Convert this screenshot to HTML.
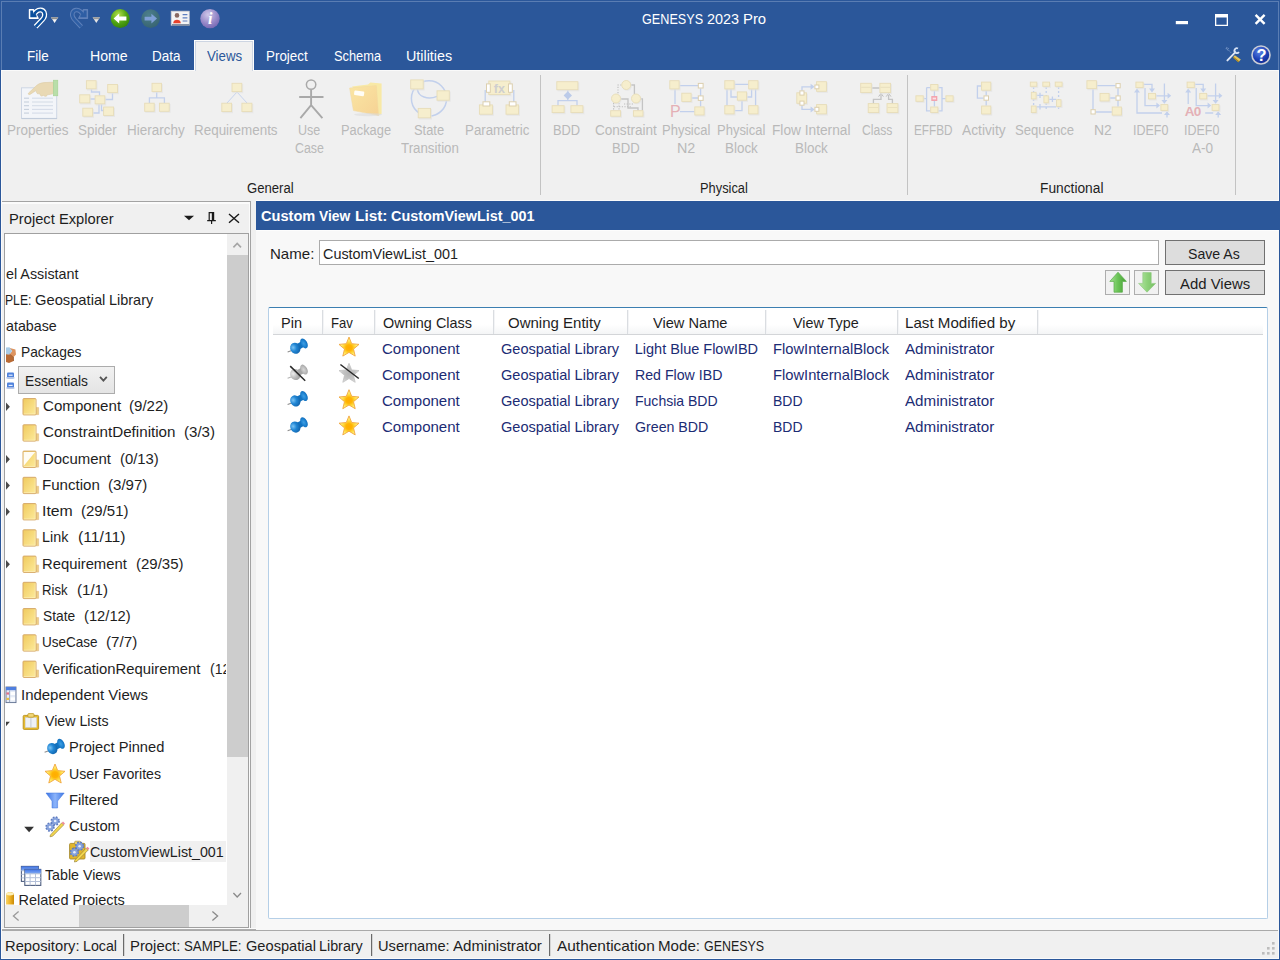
<!DOCTYPE html>
<html lang="en">
<head>
<meta charset="utf-8">
<title>GENESYS 2023 Pro</title>
<style>
html,body{margin:0;padding:0;}
body{width:1280px;height:960px;overflow:hidden;position:relative;background:#2b579a;font-family:"Liberation Sans",sans-serif;font-size:14.5px;color:#1a1a1a;}
.a{position:absolute;box-sizing:border-box;}
.t{position:absolute;white-space:pre;line-height:20px;height:20px;transform-origin:0 0;}
svg{position:absolute;overflow:visible;}
</style>
</head>
<body>
<!-- window chrome -->
<div class="a" id="ribbon" style="left:1px;top:70px;width:1278px;height:889px;background:#f0f0f0"></div>
<div class="a" style="left:2px;top:70px;width:1276px;height:1px;background:#fafafa"></div>
<div class="a" id="viewstab" style="left:194px;top:40px;width:60px;height:31px;background:#f0f0f0;border:1px solid #fdfdfd;border-bottom:none;box-shadow:inset 1px 1px 0 #cdd5e2,inset -1px 0 0 #cdd5e2"></div>
<div class="a" style="left:1px;top:1px;width:1278px;height:1px;background:#5a7db3"></div>
<div class="a" style="left:1px;top:1px;width:1px;height:69px;background:#5a7db3"></div>
<div class="a" style="left:1278px;top:1px;width:1px;height:69px;background:#5a7db3"></div>
<div class="a" style="left:1px;top:70px;width:1px;height:889px;background:#fafafa"></div>
<div class="a" style="left:1278px;top:70px;width:1px;height:889px;background:#fafafa"></div>
<div class="a" style="left:1px;top:958px;width:1278px;height:1px;background:#fafafa"></div>
<div class="a" style="left:540px;top:75px;width:1px;height:120px;background:#c3c3c3"></div>
<div class="a" style="left:907px;top:75px;width:1px;height:120px;background:#c3c3c3"></div>
<div class="a" style="left:1235px;top:75px;width:1px;height:120px;background:#c3c3c3"></div>

<!-- left panel: Project Explorer -->
<div class="a" id="pe" style="left:2px;top:201px;width:249px;height:727px;background:#f0f0f0;border:1px solid #a3a3a3;border-left:none;border-bottom:none;box-shadow:inset -1px 0 0 #fbfbfb,inset 0 2px 0 #fbfbfb"></div>
<div class="a" id="tree" style="left:4px;top:233px;width:245px;height:695px;background:#fff;border:1px solid #a0a0a0"></div>
<div class="a" id="vsb" style="left:227px;top:234px;width:21px;height:671px;background:#f0f0f0"></div>
<div class="a" id="vthumb" style="left:227px;top:255px;width:21px;height:502px;background:#cdcdcd"></div>
<div class="a" id="hsb" style="left:5px;top:905px;width:243px;height:22px;background:#f0f0f0"></div>
<div class="a" id="hthumb" style="left:79px;top:905px;width:110px;height:22px;background:#cdcdcd"></div>
<div class="a" id="selrow" style="left:90px;top:841px;width:136px;height:21px;background:#f0f0f0"></div>
<div class="a" id="combo" style="left:18px;top:366px;width:97px;height:28px;background:linear-gradient(#f1f1f1,#e4e4e4);border:1px solid #acacac"></div>

<!-- right panel -->
<div class="a" id="rp" style="left:256px;top:201px;width:1023px;height:729px;background:#f8f8f8"></div>
<div class="a" style="left:256px;top:200px;width:1023px;height:1px;background:#fbfbfb"></div>
<div class="a" style="left:256px;top:230px;width:1023px;height:1px;background:#fdfdfd"></div>
<div class="a" id="rph" style="left:256px;top:201px;width:1023px;height:29px;background:#2b579a"></div>
<div class="a" id="namebox" style="left:319px;top:240px;width:840px;height:25px;background:#fff;border:1px solid #ababab"></div>
<div class="a" id="saveas" style="left:1165px;top:240px;width:100px;height:25px;background:#dddddd;border:1px solid #707070"></div>
<div class="a" id="addviews" style="left:1165px;top:270px;width:100px;height:25px;background:#dddddd;border:1px solid #707070"></div>
<div class="a" id="upbtn" style="left:1105px;top:270px;width:25px;height:25px;background:#f1f1f1;border:1px solid #adadad"></div>
<div class="a" id="dnbtn" style="left:1134px;top:270px;width:25px;height:25px;background:#f1f1f1;border:1px solid #adadad"></div>
<div class="a" id="list" style="left:268px;top:307px;width:1000px;height:612px;background:#fff;border:1px solid #b5cfe7;border-top-color:#3c7fb1;border-radius:2px"></div>
<div class="a" id="lhdr" style="left:273px;top:310px;width:990px;height:25px;background:linear-gradient(#fff,#fff 60%,#f4f5f6);border-bottom:1px solid #d3d5d8"></div>

<div class="a" style="left:322px;top:310px;width:2px;height:24px;background:linear-gradient(90deg,#dadde1 50%,#f3f4f6 50%)"></div>
<div class="a" style="left:374px;top:310px;width:2px;height:24px;background:linear-gradient(90deg,#dadde1 50%,#f3f4f6 50%)"></div>
<div class="a" style="left:493px;top:310px;width:2px;height:24px;background:linear-gradient(90deg,#dadde1 50%,#f3f4f6 50%)"></div>
<div class="a" style="left:627px;top:310px;width:2px;height:24px;background:linear-gradient(90deg,#dadde1 50%,#f3f4f6 50%)"></div>
<div class="a" style="left:765px;top:310px;width:2px;height:24px;background:linear-gradient(90deg,#dadde1 50%,#f3f4f6 50%)"></div>
<div class="a" style="left:897px;top:310px;width:2px;height:24px;background:linear-gradient(90deg,#dadde1 50%,#f3f4f6 50%)"></div>
<div class="a" style="left:1037px;top:310px;width:2px;height:24px;background:linear-gradient(90deg,#dadde1 50%,#f3f4f6 50%)"></div>

<!-- status bar -->
<div class="a" style="left:2px;top:928px;width:254px;height:1px;background:#fbfbfb"></div>
<div class="a" style="left:2px;top:929px;width:254px;height:1px;background:#adadad"></div>
<div class="a" id="status" style="left:2px;top:930px;width:1276px;height:28px;background:#f0f0f0;border-top:1px solid #a9a9a9"></div>
<div class="a" style="left:123px;top:934px;width:2px;height:22px;background:linear-gradient(90deg,#6a6a6a 50%,#d4d4d4 50%)"></div>
<div class="a" style="left:371px;top:934px;width:2px;height:22px;background:linear-gradient(90deg,#6a6a6a 50%,#d4d4d4 50%)"></div>
<div class="a" style="left:549px;top:934px;width:2px;height:22px;background:linear-gradient(90deg,#6a6a6a 50%,#d4d4d4 50%)"></div>
<!-- icons -->
<svg width="1280" height="960" viewBox="0 0 1280 960" style="left:0;top:0">
<defs>
<linearGradient id="gFold" x1="0" y1="0" x2="1" y2="1"><stop offset="0" stop-color="#f0ca5e"/><stop offset="1" stop-color="#fdeb9c"/></linearGradient>
<radialGradient id="gGreen" cx="0.4" cy="0.3" r="0.8"><stop offset="0" stop-color="#b4e04a"/><stop offset="0.55" stop-color="#4ea312"/><stop offset="1" stop-color="#2f7a08"/></radialGradient>
<radialGradient id="gTeal" cx="0.4" cy="0.3" r="0.8"><stop offset="0" stop-color="#4d7f8c"/><stop offset="1" stop-color="#35616f"/></radialGradient>
<radialGradient id="gPurp" cx="0.4" cy="0.3" r="0.8"><stop offset="0" stop-color="#cfc8ea"/><stop offset="0.6" stop-color="#9385c6"/><stop offset="1" stop-color="#6f60ad"/></radialGradient>
<radialGradient id="gHelp" cx="0.4" cy="0.3" r="0.8"><stop offset="0" stop-color="#5f86e8"/><stop offset="0.6" stop-color="#1c3fb4"/><stop offset="1" stop-color="#10298a"/></radialGradient>
<radialGradient id="gStar" cx="0.5" cy="0.56" r="0.52"><stop offset="0" stop-color="#ffac00"/><stop offset="0.3" stop-color="#ffb304"/><stop offset="0.55" stop-color="#ffd83a"/><stop offset="0.8" stop-color="#fff27a"/><stop offset="1" stop-color="#ffe258"/></radialGradient>
<radialGradient id="gStarG" cx="0.5" cy="0.55" r="0.55"><stop offset="0" stop-color="#b4b4b4"/><stop offset="0.6" stop-color="#c6c6c6"/><stop offset="1" stop-color="#e6e6e6"/></radialGradient>
<radialGradient id="gPin" cx="0.35" cy="0.35" r="0.75"><stop offset="0" stop-color="#7cc4f4"/><stop offset="0.45" stop-color="#2186d4"/><stop offset="1" stop-color="#0f5fa6"/></radialGradient>
<radialGradient id="gPin2" cx="0.45" cy="0.5" r="0.6"><stop offset="0" stop-color="#3f9fe2"/><stop offset="0.6" stop-color="#1a7fcf"/><stop offset="1" stop-color="#0f66b0"/></radialGradient>
<radialGradient id="gPinG2" cx="0.45" cy="0.5" r="0.6"><stop offset="0" stop-color="#d8d8d8"/><stop offset="0.6" stop-color="#b8b8b8"/><stop offset="1" stop-color="#9c9c9c"/></radialGradient>
<radialGradient id="gPinG" cx="0.35" cy="0.35" r="0.75"><stop offset="0" stop-color="#efefef"/><stop offset="0.5" stop-color="#bdbdbd"/><stop offset="1" stop-color="#9a9a9a"/></radialGradient>
<linearGradient id="gFun" x1="0" y1="0" x2="1" y2="0"><stop offset="0" stop-color="#3a72e4"/><stop offset="0.5" stop-color="#8cb4fa"/><stop offset="1" stop-color="#3f78e6"/></linearGradient>
<linearGradient id="gUp" x1="0" y1="0" x2="1" y2="0"><stop offset="0" stop-color="#a8e296"/><stop offset="0.45" stop-color="#6ec65a"/><stop offset="1" stop-color="#449f33"/></linearGradient>
<linearGradient id="gDn" x1="0" y1="0" x2="1" y2="0"><stop offset="0" stop-color="#b7e6a6"/><stop offset="0.5" stop-color="#8ed27a"/><stop offset="1" stop-color="#76bf62"/></linearGradient>
<linearGradient id="gTblH" x1="0" y1="0" x2="0" y2="1"><stop offset="0" stop-color="#3f73e6"/><stop offset="1" stop-color="#86aef4"/></linearGradient>
<linearGradient id="gPkg" x1="0" y1="0" x2="1" y2="1"><stop offset="0" stop-color="#fae6a4"/><stop offset="1" stop-color="#f6d294"/></linearGradient>
<linearGradient id="gCyl" x1="0" y1="0" x2="1" y2="0"><stop offset="0" stop-color="#f8d468"/><stop offset="0.5" stop-color="#efb224"/><stop offset="1" stop-color="#c98a08"/></linearGradient>
<g id="pin"><path d="M-0.4 13.7 L3.8 12.2" stroke="#8e8e8e" stroke-width="1.1" fill="none"/><g transform="translate(7.3 10) rotate(-29)"><rect x="2" y="-3" width="7.4" height="6" fill="#1273c0"/><ellipse rx="5" ry="5.7" fill="url(#gPin)"/></g><g transform="translate(16 5.1) rotate(-29)"><ellipse rx="3.2" ry="5.4" fill="url(#gPin2)"/></g></g>
<g id="ping"><path d="M-0.4 13.7 L3.8 12.2" stroke="#b4b4b4" stroke-width="1.1" fill="none"/><g transform="translate(7.3 10) rotate(-29)"><rect x="2" y="-3" width="7.4" height="6" fill="#a8a8a8"/><ellipse rx="5" ry="5.7" fill="url(#gPinG)"/></g><g transform="translate(16 5.1) rotate(-29)"><ellipse rx="3.2" ry="5.4" fill="url(#gPinG2)"/></g><path d="M2.2 1.6 L17.2 16.2" stroke="#2a2a2a" stroke-width="1.5"/></g>
<path id="starp" d="M10 0 L12.7 6.6 L20 7.3 L14.5 12 L16.2 19 L10 15.3 L3.8 19 L5.5 12 L0 7.3 L7.3 6.6 Z"/>
<g id="star"><use href="#starp" fill="url(#gStar)" stroke="#f2a640" stroke-width="0.9" stroke-linejoin="round"/></g>
<g id="starg"><use href="#starp" fill="url(#gStarG)" stroke="#bcbcbc" stroke-width="0.7" stroke-linejoin="round"/><path d="M1.4 1.2 L19.8 15.2" stroke="#2a2a2a" stroke-width="1.5"/></g>
<g id="fold"><path d="M13.5 9.6 H16.2 V16.6 H13.5 Z" fill="#efd084" stroke="#e4bf8a" stroke-width="0.7"/><rect x="0.6" y="0.6" width="13" height="16.3" rx="0.8" fill="url(#gFold)" stroke="#d6a868" stroke-width="1"/><path d="M1.4 16 H12.8 V1.6" stroke="#fff4c8" stroke-width="0.7" fill="none" opacity="0.8"/></g>
<g id="gear"><circle cx="0" cy="0" r="3.6" fill="#7d98d6" stroke="#5f7cc0" stroke-width="2.2" stroke-dasharray="1.6 1.25"/><circle cx="0" cy="0" r="3.2" fill="#86a2dc"/><circle cx="0" cy="0" r="1.3" fill="#e8eefb"/></g>
</defs>

<path d="M29.4 9.6 L33.4 9.6 L38.2 18.3 L29.4 18.3 Z" fill="#ffffff" stroke="#ffffff" stroke-width="1.2" stroke-linejoin="round"/>
<path d="M34.2 13.8 L36.6 11.4 C38.8 9.4 42.8 9.4 44.2 12.4 C45.4 15.2 44 17.8 42.2 19.8 L35.6 26.8" fill="none" stroke="#ffffff" stroke-width="5.0"/>
<path d="M30.3 10.5 L32.8 10.5 L33.4 13.2 L36.2 14.6 L36.8 17.2 L30.3 17.2 Z" fill="#0a4f9e"/>
<path d="M34.2 13.8 L36.6 11.4 C38.8 9.4 42.8 9.4 44.2 12.4 C45.4 15.2 44 17.8 42.2 19.8 L35.6 26.8" fill="none" stroke="#0a4f9e" stroke-width="2.6"/>
<path d="M50.9 17.2 L58.3 17.2 L54.6 23 Z" fill="#f4f4f4"/><path d="M50.9 17.2 L58.3 17.2 L57 19.2 L52.2 19.2 Z" fill="#8e8e8e"/>
<path d="M87.5 9.6 L83.5 9.6 L78.7 18.3 L87.5 18.3 Z" fill="#5f81ba" stroke="#5f81ba" stroke-width="1.2" stroke-linejoin="round"/>
<path d="M82.7 13.8 L80.30000000000001 11.4 C78.10000000000001 9.4 74.10000000000001 9.4 72.7 12.4 C71.5 15.2 72.9 17.8 74.7 19.8 L81.30000000000001 26.8" fill="none" stroke="#5f81ba" stroke-width="4.6"/>
<path d="M86.60000000000001 10.5 L84.10000000000001 10.5 L83.5 13.2 L80.7 14.6 L80.10000000000001 17.2 L86.60000000000001 17.2 Z" fill="#2e5ea4"/>
<path d="M82.7 13.8 L80.30000000000001 11.4 C78.10000000000001 9.4 74.10000000000001 9.4 72.7 12.4 C71.5 15.2 72.9 17.8 74.7 19.8 L81.30000000000001 26.8" fill="none" stroke="#2e5ea4" stroke-width="2.6"/>
<path d="M92.6 17.2 L100 17.2 L96.3 23 Z" fill="#e4e4e4"/><path d="M92.6 17.2 L100 17.2 L98.7 19.2 L93.9 19.2 Z" fill="#9a9a9a"/>
<circle cx="120.2" cy="18.6" r="9.5" fill="url(#gGreen)"/><path d="M113.6 18.6 L119.2 13.6 L119.2 16.6 L126.4 16.6 L126.4 20.6 L119.2 20.6 L119.2 23.6 Z" fill="#ffffff"/>
<circle cx="150.6" cy="18.6" r="9.3" fill="url(#gTeal)"/><path d="M157 18.6 L151.4 13.8 L151.4 16.8 L144.6 16.8 L144.6 20.4 L151.4 20.4 L151.4 23.4 Z" fill="#7f9fd6"/>
<rect x="171.2" y="11.2" width="18" height="14" fill="#f4f4f4" stroke="#cfcfd4" stroke-width="0.8"/><rect x="172" y="24.2" width="17.4" height="1.4" fill="#6c7a92"/><circle cx="177" cy="15.4" r="2.3" fill="#8a6a62"/><path d="M173.2 23.2 C173.2 18.6 180.8 18.6 180.8 23.2 Z" fill="#e8412c"/><path d="M182.6 14.6 H187.4 M182.6 17.8 H187.4 M182.6 21 H187.4" stroke="#5e7fc0" stroke-width="1.2"/>
<circle cx="210" cy="18.6" r="9.7" fill="url(#gPurp)"/><text x="210.2" y="24" font-family="Liberation Serif,serif" font-style="italic" font-weight="700" font-size="16" fill="#ffffff" text-anchor="middle">i</text>
<rect x="1175.8" y="21" width="12.2" height="3.2" fill="#ffffff"/>
<path d="M1215 14 H1228 V26 H1215 Z M1216.3 17.6 V24.7 H1226.7 V17.6 Z" fill="#ffffff" fill-rule="evenodd"/>
<path d="M1255.6 14.8 L1264.6 23.8 M1264.6 14.8 L1255.6 23.8" stroke="#ffffff" stroke-width="2.4"/>
<path d="M1227.4 60.4 L1235.4 52.2" stroke="#dfe7f5" stroke-width="1.9" stroke-linecap="round"/><path d="M1238.9 51.9 A2.4 2.4 0 1 1 1238 48.5" fill="none" stroke="#d6e2f6" stroke-width="1.8"/><path d="M1226.4 47.4 L1228.4 48.2 L1228 50 L1226.2 49.2 Z M1228.6 50.2 L1231 52.8" fill="none" stroke="#8fa8d2" stroke-width="0.8" stroke-dasharray="1.2 0.8"/><path d="M1234.8 55.2 L1240.8 59.4 L1238.4 62.2 L1233 57.6 Z" fill="#e6c55a"/><path d="M1233 57.6 L1238.4 62.2 L1239.2 61.2 L1233.6 56.8 Z" fill="#a17f1f"/>
<circle cx="1261" cy="55" r="9.8" fill="#c9ccd6"/><circle cx="1261" cy="55" r="8.2" fill="url(#gHelp)"/><text x="1261.6" y="60.8" font-family="Liberation Sans,sans-serif" font-weight="700" font-size="16.5" fill="#ffffff" text-anchor="middle">?</text>
<rect x="21.5" y="87.8" width="35.2" height="30.6" fill="#f3f5f9" stroke="#ced6e4" stroke-width="1"/><path d="M21.6 118.6 H57" stroke="#c0cada" stroke-width="1"/>
<path d="M24 98.2 H29" fill="none" stroke="#c6cfdc" stroke-width="1.1" />
<path d="M32 98.2 H53" fill="none" stroke="#d5dce8" stroke-width="1.1" />
<path d="M24 102 H29" fill="none" stroke="#c6cfdc" stroke-width="1.1" />
<path d="M32 102 H53" fill="none" stroke="#d5dce8" stroke-width="1.1" />
<path d="M24 105.7 H29" fill="none" stroke="#c6cfdc" stroke-width="1.1" />
<path d="M32 105.7 H53" fill="none" stroke="#d5dce8" stroke-width="1.1" />
<path d="M24 109.4 H29" fill="none" stroke="#c6cfdc" stroke-width="1.1" />
<path d="M32 109.4 H53" fill="none" stroke="#d5dce8" stroke-width="1.1" />
<path d="M24 113.1 H29" fill="none" stroke="#c6cfdc" stroke-width="1.1" />
<path d="M32 113.1 H53" fill="none" stroke="#d5dce8" stroke-width="1.1" />
<path d="M53.4 82.2 L44 82.6 C40 83 37.5 84.5 35.5 86.5 L28.6 93 C27.8 94 28.8 95 30 94.4 L36 90.6 L36.6 92.6 C37 94 38.6 94.2 39.4 93.2 L40.2 95 C40.8 96.4 42.6 96.4 43.2 95.2 L44.4 96 C45.6 96.8 47 96.2 47.2 94.8 C49.6 94.6 51.6 94.2 53.4 93.6 Z" fill="#e9d9b4" stroke="#dccba4" stroke-width="0.6"/>
<rect x="53.4" y="80.2" width="4.4" height="15.6" fill="#b9dea9" stroke="#a4d292" stroke-width="0.6"/>
<path d="M91.5 89 V92 H99.5 V95.5 M90 99 H95 M105 99.5 H112.5 V93 M99 104 V113 H93 M101.5 104 V110.5 H104" fill="none" stroke="#c2d0ec" stroke-width="1.3" />
<rect x="87.0" y="81.5" width="10.5" height="8.9" fill="#e2e2e2" opacity="0.7"/>
<rect x="86.4" y="80.7" width="9.7" height="8.1" fill="#f6eecd" stroke="#e7dcb8" stroke-width="0.9"/>
<rect x="108.3" y="85.3" width="10.6" height="8.9" fill="#e2e2e2" opacity="0.7"/>
<rect x="107.7" y="84.5" width="9.8" height="8.1" fill="#f6eecd" stroke="#e7dcb8" stroke-width="0.9"/>
<rect x="80.3" y="95.6" width="10.9" height="8.9" fill="#e2e2e2" opacity="0.7"/>
<rect x="79.7" y="94.8" width="10.1" height="8.1" fill="#f6eecd" stroke="#e7dcb8" stroke-width="0.9"/>
<rect x="95.7" y="96.6" width="10.5" height="8.8" fill="#e2e2e2" opacity="0.7"/>
<rect x="95.1" y="95.8" width="9.7" height="8.0" fill="#f6eecd" stroke="#e7dcb8" stroke-width="0.9"/>
<rect x="83.4" y="109.0" width="10.6" height="8.8" fill="#e2e2e2" opacity="0.7"/>
<rect x="82.8" y="108.2" width="9.8" height="8.0" fill="#f6eecd" stroke="#e7dcb8" stroke-width="0.9"/>
<rect x="104.2" y="107.8" width="10.8" height="9.2" fill="#e2e2e2" opacity="0.7"/>
<rect x="103.6" y="107.0" width="10.0" height="8.4" fill="#f6eecd" stroke="#e7dcb8" stroke-width="0.9"/>
<path d="M156.7 91.5 V97.9 M149.4 103 V97.9 H164.4 V103" fill="none" stroke="#c2d0ec" stroke-width="1.3" />
<rect x="152.6" y="84.1" width="10.3" height="9.0" fill="#e2e2e2" opacity="0.7"/>
<rect x="152.0" y="83.3" width="9.5" height="8.2" fill="#f6eecd" stroke="#e7dcb8" stroke-width="0.9"/>
<rect x="145.3" y="104.0" width="10.3" height="8.9" fill="#e2e2e2" opacity="0.7"/>
<rect x="144.7" y="103.2" width="9.5" height="8.1" fill="#f6eecd" stroke="#e7dcb8" stroke-width="0.9"/>
<rect x="160.0" y="104.0" width="10.6" height="8.9" fill="#e2e2e2" opacity="0.7"/>
<rect x="159.4" y="103.2" width="9.8" height="8.1" fill="#f6eecd" stroke="#e7dcb8" stroke-width="0.9"/>
<path d="M237 92 L227 103 M237 92 L247 103" fill="none" stroke="#c2d0ec" stroke-width="0.9" />
<rect x="232.6" y="84.1" width="10.6" height="9.1" fill="#e2e2e2" opacity="0.7"/>
<rect x="232.0" y="83.3" width="9.8" height="8.3" fill="#f6eecd" stroke="#e7dcb8" stroke-width="0.9"/>
<rect x="222.4" y="104.0" width="10.6" height="9.2" fill="#e2e2e2" opacity="0.7"/>
<rect x="221.8" y="103.2" width="9.8" height="8.4" fill="#f6eecd" stroke="#e7dcb8" stroke-width="0.9"/>
<rect x="242.5" y="104.0" width="10.8" height="9.2" fill="#e2e2e2" opacity="0.7"/>
<rect x="241.9" y="103.2" width="10.0" height="8.4" fill="#f6eecd" stroke="#e7dcb8" stroke-width="0.9"/>
<g fill="none" stroke="#a9a9a9" stroke-width="1.9"><circle cx="311.1" cy="84.6" r="4.7" stroke-width="1.5"/><path d="M311.1 89.6 V105.6 M299.2 97 H323.5 M311.1 105.2 L300.4 118.2 M311.1 105.2 L322.4 118.2"/></g>
<path d="M352 86.6 L368 84.4 L370.4 82.6 L381.6 83.6 L381.6 113.8 L378 115.4 Z" fill="#f8e9a6"/><path d="M349.6 88 L376.4 85.6 L378.6 115.6 L353.4 110.6 Z" fill="url(#gPkg)" stroke="#f0d9a0" stroke-width="0.5"/><rect x="354.2" y="91" width="10" height="4.6" rx="1" fill="#fffdf6" transform="rotate(8 359 93)"/><ellipse cx="368" cy="114.6" rx="14" ry="1.6" fill="#dcdcdc" opacity="0.6"/>
<circle cx="429" cy="98.4" r="17.6" fill="none" stroke="#c2d0ec" stroke-width="1.5"/>
<path d="M417.4 89 C418 97 428 100 437 96.4" fill="none" stroke="#c2d0ec" stroke-width="1.5" />
<rect x="411.3" y="80.7" width="13.3" height="9.8" fill="#e2e2e2" opacity="0.7"/>
<rect x="410.7" y="79.9" width="12.5" height="9.0" fill="#f6eecd" stroke="#e7dcb8" stroke-width="0.9"/>
<rect x="437.6" y="91.6" width="13.1" height="10.2" fill="#e2e2e2" opacity="0.7"/>
<rect x="437.0" y="90.8" width="12.3" height="9.4" fill="#f6eecd" stroke="#e7dcb8" stroke-width="0.9"/>
<rect x="418.8" y="109.2" width="13.2" height="10.2" fill="#e2e2e2" opacity="0.7"/>
<rect x="418.2" y="108.4" width="12.4" height="9.4" fill="#f6eecd" stroke="#e7dcb8" stroke-width="0.9"/>
<path d="M485.2 90 V103 M513.8 90 V103" fill="none" stroke="#c2d0ec" stroke-width="1.3" />
<rect x="489.4" y="81.8" width="21.9" height="14.4" fill="#e2e2e2" opacity="0.7"/>
<rect x="488.8" y="81.0" width="21.1" height="13.6" fill="#f6eecd" stroke="#e7dcb8" stroke-width="0.9"/>
<text x="499.4" y="93.2" font-family="Liberation Sans,sans-serif" font-weight="700" font-size="12.5" fill="#cfcfcf" text-anchor="middle">fx</text>
<rect x="486.5" y="83.9" width="3.8" height="8.4" fill="#ffffff" stroke="#dccfae" stroke-width="1"/>
<rect x="508.5" y="83.9" width="3.8" height="8.4" fill="#ffffff" stroke="#dccfae" stroke-width="1"/>
<rect x="480.0" y="105.7" width="13.8" height="10.1" fill="#e2e2e2" opacity="0.7"/>
<rect x="479.4" y="104.9" width="13.0" height="9.3" fill="#f6eecd" stroke="#e7dcb8" stroke-width="0.9"/>
<rect x="506.6" y="105.7" width="13.4" height="10.1" fill="#e2e2e2" opacity="0.7"/>
<rect x="506.0" y="104.9" width="12.6" height="9.3" fill="#f6eecd" stroke="#e7dcb8" stroke-width="0.9"/>
<rect x="483.0" y="101.8" width="6.8" height="4.2" fill="#ffffff" stroke="#dccfae" stroke-width="1"/>
<rect x="509.3" y="101.8" width="6.7" height="4.2" fill="#ffffff" stroke="#dccfae" stroke-width="1"/>
<path d="M567.8 90 V100.6 M558 105.4 V100.6 H577 V105.4" fill="none" stroke="#c2d0ec" stroke-width="1.3" />
<path d="M567.8 91.2 L572 95.4 L567.8 99.6 L563.6 95.4 Z" fill="#bccbe9"/>
<rect x="557.4" y="82.5" width="21.9" height="8.8" fill="#e2e2e2" opacity="0.7"/>
<rect x="556.8" y="81.7" width="21.1" height="8.0" fill="#f6eecd" stroke="#e7dcb8" stroke-width="0.9"/>
<rect x="552.7" y="106.5" width="12.8" height="7.7" fill="#e2e2e2" opacity="0.7"/>
<rect x="552.1" y="105.7" width="12.0" height="6.9" fill="#f6eecd" stroke="#e7dcb8" stroke-width="0.9"/>
<rect x="571.5" y="106.5" width="12.8" height="7.7" fill="#e2e2e2" opacity="0.7"/>
<rect x="570.9" y="105.7" width="12.0" height="6.9" fill="#f6eecd" stroke="#e7dcb8" stroke-width="0.9"/>
<path d="M631 85 H634.4 V94 M621 99 H628 V108 H638 V110.4 M640.6 99 H642.4 V110.4" fill="none" stroke="#c4c4c4" stroke-width="1.3" />
<path d="M621.4 85 H618 V94 M613.6 103 V110 M619 103 V110 M614 106.8 H632 M624 104 H634" fill="none" stroke="#bdbdbd" stroke-width="1.1" stroke-dasharray="1.2 1.4"/>
<circle cx="627.05" cy="86" r="4.8" fill="#e2e2e2" opacity="0.7"/><circle cx="626.25" cy="85" r="4.5" fill="#f6eecd" stroke="#e7dcb8" stroke-width="0.9"/>
<circle cx="616.8" cy="99.5" r="4.8" fill="#e2e2e2" opacity="0.7"/><circle cx="616" cy="98.5" r="4.5" fill="#f6eecd" stroke="#e7dcb8" stroke-width="0.9"/>
<circle cx="636.8" cy="99.5" r="4.8" fill="#e2e2e2" opacity="0.7"/><circle cx="636" cy="98.5" r="4.5" fill="#f6eecd" stroke="#e7dcb8" stroke-width="0.9"/>
<rect x="611.3" y="111.5" width="10.7" height="6.2" fill="#e2e2e2" opacity="0.7"/>
<rect x="610.7" y="110.7" width="9.9" height="5.5" fill="#f6eecd" stroke="#e7dcb8" stroke-width="0.9"/>
<rect x="634.0" y="111.5" width="10.4" height="6.2" fill="#e2e2e2" opacity="0.7"/>
<rect x="633.4" y="110.7" width="9.6" height="5.5" fill="#f6eecd" stroke="#e7dcb8" stroke-width="0.9"/>
<path d="M679.5 85.6 H698 M675 89 V104 M680 111.6 H694.4 M700.6 88.4 V106.6 M691.5 98 H698" fill="none" stroke="#c2d0ec" stroke-width="1.3" />
<rect x="670.4" y="81.5" width="10.1" height="9.0" fill="#e2e2e2" opacity="0.7"/>
<rect x="669.8" y="80.7" width="9.3" height="8.2" fill="#f6eecd" stroke="#e7dcb8" stroke-width="0.9"/>
<rect x="682.4" y="94.0" width="10.1" height="9.0" fill="#e2e2e2" opacity="0.7"/>
<rect x="681.8" y="93.2" width="9.3" height="8.2" fill="#f6eecd" stroke="#e7dcb8" stroke-width="0.9"/>
<rect x="695.4" y="107.7" width="10.1" height="8.9" fill="#e2e2e2" opacity="0.7"/>
<rect x="694.8" y="106.9" width="9.3" height="8.1" fill="#f6eecd" stroke="#e7dcb8" stroke-width="0.9"/>
<rect x="698.3" y="83.4" width="4.8" height="4.6" fill="#ffffff" stroke="#dccfae" stroke-width="1"/>
<rect x="698.3" y="95.9" width="4.8" height="4.5" fill="#ffffff" stroke="#dccfae" stroke-width="1"/>
<text x="670" y="117" font-family="Liberation Sans,sans-serif" font-size="16" fill="#e4b0b6">P</text>
<path d="M734.5 84.4 H748.3 M727 89 V105.4 M755.6 89 V105.4 M731 89 V97 H737 M751.6 89 V97 H747 M742 100.6 V110.6 H734.5" fill="none" stroke="#c2d0ec" stroke-width="1.3" />
<rect x="725.4" y="81.5" width="10.1" height="9.0" fill="#e2e2e2" opacity="0.7"/>
<rect x="724.8" y="80.7" width="9.3" height="8.2" fill="#f6eecd" stroke="#e7dcb8" stroke-width="0.9"/>
<rect x="749.3" y="81.5" width="10.1" height="9.0" fill="#e2e2e2" opacity="0.7"/>
<rect x="748.7" y="80.7" width="9.3" height="8.2" fill="#f6eecd" stroke="#e7dcb8" stroke-width="0.9"/>
<rect x="737.9" y="92.7" width="10.1" height="9.1" fill="#e2e2e2" opacity="0.7"/>
<rect x="737.3" y="91.9" width="9.3" height="8.3" fill="#f6eecd" stroke="#e7dcb8" stroke-width="0.9"/>
<rect x="725.4" y="106.5" width="10.1" height="9.0" fill="#e2e2e2" opacity="0.7"/>
<rect x="724.8" y="105.7" width="9.3" height="8.2" fill="#f6eecd" stroke="#e7dcb8" stroke-width="0.9"/>
<rect x="749.3" y="106.5" width="10.1" height="9.0" fill="#e2e2e2" opacity="0.7"/>
<rect x="748.7" y="105.7" width="9.3" height="8.2" fill="#f6eecd" stroke="#e7dcb8" stroke-width="0.9"/>
<path d="M802 90.4 V86.8 H812 M802 105.6 V109.4 H812" fill="none" stroke="#c2d0ec" stroke-width="1.3" />
<path d="M810.6 83.8 L814.6 86.8 L810.6 89.8 Z M810.6 106.4 L814.6 109.4 L810.6 112.4 Z" fill="#c2d0ec"/>
<rect x="797.4" y="93.6" width="10.5" height="11.3" fill="#e2e2e2" opacity="0.7"/>
<rect x="796.8" y="92.8" width="9.7" height="10.5" fill="#f6eecd" stroke="#e7dcb8" stroke-width="0.9"/>
<rect x="817.2" y="82.5" width="10.6" height="10.4" fill="#e2e2e2" opacity="0.7"/>
<rect x="816.6" y="81.7" width="9.8" height="9.6" fill="#f6eecd" stroke="#e7dcb8" stroke-width="0.9"/>
<rect x="817.2" y="105.4" width="10.6" height="10.1" fill="#e2e2e2" opacity="0.7"/>
<rect x="816.6" y="104.6" width="9.8" height="9.3" fill="#f6eecd" stroke="#e7dcb8" stroke-width="0.9"/>
<rect x="799.9" y="90.9" width="4.1" height="4.2" fill="#ffffff" stroke="#dccfae" stroke-width="1"/>
<rect x="799.9" y="101.1" width="4.1" height="4.1" fill="#ffffff" stroke="#dccfae" stroke-width="1"/>
<rect x="814.9" y="85.0" width="4.0" height="3.8" fill="#ffffff" stroke="#dccfae" stroke-width="1"/>
<rect x="814.9" y="107.3" width="4.0" height="4.0" fill="#ffffff" stroke="#dccfae" stroke-width="1"/>
<path d="M871.7 88 H879.5 M873.4 103.2 V99.4 H881 V95 M892.4 103.2 V99.4 H888.6 V95" fill="none" stroke="#c4c4c4" stroke-width="1.3" />
<path d="M878.6 96.6 L881 93.4 L883.4 96.6 M886.2 96.6 L888.6 93.4 L891 96.6" fill="none" stroke="#bdbdbd" stroke-width="1" />
<rect x="861.3" y="84.1" width="11.4" height="10.1" fill="#e2e2e2" opacity="0.7"/>
<rect x="860.7" y="83.3" width="10.6" height="9.3" fill="#f6eecd" stroke="#e7dcb8" stroke-width="0.9"/>
<path d="M861.3 87.4 H870.7" fill="none" stroke="#e9dfbd" stroke-width="0.9" />
<rect x="880.5" y="84.1" width="11.5" height="10.1" fill="#e2e2e2" opacity="0.7"/>
<rect x="879.9" y="83.3" width="10.7" height="9.3" fill="#f6eecd" stroke="#e7dcb8" stroke-width="0.9"/>
<path d="M880.5 87.4 H890" fill="none" stroke="#e9dfbd" stroke-width="0.9" />
<rect x="868.8" y="104.4" width="11.4" height="9.8" fill="#e2e2e2" opacity="0.7"/>
<rect x="868.2" y="103.6" width="10.6" height="9.0" fill="#f6eecd" stroke="#e7dcb8" stroke-width="0.9"/>
<path d="M868.8 107.5 H878.2" fill="none" stroke="#e9dfbd" stroke-width="0.9" />
<rect x="887.6" y="104.4" width="11.7" height="9.8" fill="#e2e2e2" opacity="0.7"/>
<rect x="887.0" y="103.6" width="10.9" height="9.0" fill="#f6eecd" stroke="#e7dcb8" stroke-width="0.9"/>
<path d="M887.6 107.5 H897.3" fill="none" stroke="#e9dfbd" stroke-width="0.9" />
<path d="M923.6 98.6 H926.6 M926.6 87.6 H930.4 M926.6 87.6 V110.8 H930.4 M938.2 87.6 H942 V110.8 H938.2 M942 98.6 H945.6 M934.4 90.4 V96 M934.4 101 V106.6" fill="none" stroke="#c2d0ec" stroke-width="1.3" />
<rect x="916.5" y="96.6" width="8.1" height="6.3" fill="#e2e2e2" opacity="0.7"/>
<rect x="915.9" y="95.8" width="7.3" height="5.5" fill="#f6eecd" stroke="#e7dcb8" stroke-width="0.9"/>
<rect x="946.5" y="96.6" width="8.0" height="6.3" fill="#e2e2e2" opacity="0.7"/>
<rect x="945.9" y="95.8" width="7.2" height="5.5" fill="#f6eecd" stroke="#e7dcb8" stroke-width="0.9"/>
<rect x="931.3" y="85.3" width="8.0" height="6.4" fill="#e2e2e2" opacity="0.7"/>
<rect x="930.7" y="84.5" width="7.2" height="5.6" fill="#f6eecd" stroke="#e7dcb8" stroke-width="0.9"/>
<rect x="931.3" y="107.8" width="8.0" height="6.4" fill="#e2e2e2" opacity="0.7"/>
<rect x="930.7" y="107.0" width="7.2" height="5.6" fill="#f6eecd" stroke="#e7dcb8" stroke-width="0.9"/>
<rect x="931.3" y="96" width="6" height="5" fill="#f3a4ae"/><rect x="932.6" y="97.6" width="3.4" height="1.8" fill="#fbe0e4"/>
<path d="M981.2 86 H977.4 V98.2 H983.6 M986.2 90.6 V95.4 M986.2 100.6 V105.6" fill="none" stroke="#c2d0ec" stroke-width="1.3" />
<rect x="982.2" y="82.9" width="10.0" height="8.9" fill="#e2e2e2" opacity="0.7"/>
<rect x="981.6" y="82.1" width="9.2" height="8.1" fill="#f6eecd" stroke="#e7dcb8" stroke-width="0.9"/>
<rect x="982.2" y="106.8" width="10.0" height="8.8" fill="#e2e2e2" opacity="0.7"/>
<rect x="981.6" y="106.0" width="9.2" height="8.0" fill="#f6eecd" stroke="#e7dcb8" stroke-width="0.9"/>
<rect x="984.0" y="95.9" width="4.5" height="4.3" fill="#ffffff" stroke="#dccfae" stroke-width="1"/>
<path d="M1033.6 87 V111 M1046.2 87 V111 M1058.6 87 V111" fill="none" stroke="#c2d0ec" stroke-width="1.3" stroke-dasharray="2 2"/>
<path d="M1036.5 95.4 H1043.5 M1040 92.8 V98 M1048.7 99.3 H1056.2 M1052.4 96.6 V102 M1036.5 106.8 H1056.2 M1040 104 V109.4" fill="none" stroke="#c2d0ec" stroke-width="1.3" />
<rect x="1030.9" y="82.9" width="7.3" height="5.0" fill="#e2e2e2" opacity="0.7"/>
<rect x="1030.3" y="82.1" width="6.5" height="4.2" fill="#f6eecd" stroke="#e7dcb8" stroke-width="0.9"/>
<rect x="1043.4" y="82.9" width="7.5" height="5.0" fill="#e2e2e2" opacity="0.7"/>
<rect x="1042.8" y="82.1" width="6.7" height="4.2" fill="#f6eecd" stroke="#e7dcb8" stroke-width="0.9"/>
<rect x="1055.8" y="82.9" width="7.7" height="5.0" fill="#e2e2e2" opacity="0.7"/>
<rect x="1055.2" y="82.1" width="6.9" height="4.2" fill="#f6eecd" stroke="#e7dcb8" stroke-width="0.9"/>
<rect x="1031.9" y="93.1" width="5.6" height="7.4" fill="#e2e2e2" opacity="0.7"/>
<rect x="1031.3" y="92.3" width="4.8" height="6.6" fill="#f6eecd" stroke="#e7dcb8" stroke-width="0.9"/>
<rect x="1044.5" y="96.6" width="5.2" height="7.8" fill="#e2e2e2" opacity="0.7"/>
<rect x="1043.9" y="95.8" width="4.4" height="7.0" fill="#f6eecd" stroke="#e7dcb8" stroke-width="0.9"/>
<rect x="1057.2" y="100.5" width="5.2" height="7.5" fill="#e2e2e2" opacity="0.7"/>
<rect x="1056.6" y="99.7" width="4.4" height="6.7" fill="#f6eecd" stroke="#e7dcb8" stroke-width="0.9"/>
<rect x="1031.9" y="106.8" width="5.6" height="7.4" fill="#e2e2e2" opacity="0.7"/>
<rect x="1031.3" y="106.0" width="4.8" height="6.6" fill="#f6eecd" stroke="#e7dcb8" stroke-width="0.9"/>
<path d="M1096.8 85.6 H1115.6 M1093 89 V109.4 M1095.6 112 H1111.8 M1118 88.2 V106.6 M1109.5 98 H1115.6" fill="none" stroke="#c2d0ec" stroke-width="1.3" />
<rect x="1087.5" y="81.5" width="10.3" height="8.7" fill="#e2e2e2" opacity="0.7"/>
<rect x="1086.9" y="80.7" width="9.5" height="7.9" fill="#f6eecd" stroke="#e7dcb8" stroke-width="0.9"/>
<rect x="1100.6" y="94.2" width="9.9" height="8.4" fill="#e2e2e2" opacity="0.7"/>
<rect x="1100.0" y="93.4" width="9.1" height="7.6" fill="#f6eecd" stroke="#e7dcb8" stroke-width="0.9"/>
<rect x="1112.8" y="107.8" width="10.0" height="8.9" fill="#e2e2e2" opacity="0.7"/>
<rect x="1112.2" y="107.0" width="9.2" height="8.1" fill="#f6eecd" stroke="#e7dcb8" stroke-width="0.9"/>
<rect x="1116.0" y="83.6" width="4.2" height="4.2" fill="#ffffff" stroke="#dccfae" stroke-width="1"/>
<rect x="1116.0" y="95.9" width="4.2" height="4.3" fill="#ffffff" stroke="#dccfae" stroke-width="1"/>
<rect x="1091.0" y="109.7" width="4.2" height="4.3" fill="#ffffff" stroke="#dccfae" stroke-width="1"/>
<path d="M1143.5 84.4 H1152 V90 M1145 88 V105.6 H1157 M1155.9 95.8 H1168 M1164.4 83.6 V101.4" fill="none" stroke="#c2d0ec" stroke-width="1.3" />
<path d="M1149 88.6 L1152 92.6 L1155 88.6 Z M1156.4 102.6 L1160 105.6 L1156.4 108.6 Z M1167.6 92.8 L1171.2 95.8 L1167.6 98.8 Z M1161.4 100 L1164.4 103.8 L1167.4 100 Z M1164 115 L1167 111.2 L1170 115 Z" fill="#c2d0ec"/>
<path d="M1167 114 V117.4" fill="none" stroke="#c2d0ec" stroke-width="1.3" />
<path d="M1137 91 V113 H1162" fill="none" stroke="#c2d0ec" stroke-width="1.3" />
<path d="M1134 92.4 L1137 88.6 L1140 92.4 Z" fill="#c2d0ec"/>
<rect x="1136.5" y="82.9" width="8.0" height="6.3" fill="#e2e2e2" opacity="0.7"/>
<rect x="1135.9" y="82.1" width="7.2" height="5.5" fill="#f6eecd" stroke="#e7dcb8" stroke-width="0.9"/>
<rect x="1149.1" y="94.2" width="7.8" height="6.3" fill="#e2e2e2" opacity="0.7"/>
<rect x="1148.5" y="93.4" width="7.0" height="5.5" fill="#f6eecd" stroke="#e7dcb8" stroke-width="0.9"/>
<rect x="1161.5" y="105.4" width="7.7" height="6.6" fill="#e2e2e2" opacity="0.7"/>
<rect x="1160.9" y="104.6" width="6.9" height="5.8" fill="#f6eecd" stroke="#e7dcb8" stroke-width="0.9"/>
<path d="M1194.7 84.4 H1203.2 V90 M1196.2 88 V105.6 H1208.2 M1207.1000000000001 95.8 H1219.2 M1215.6000000000001 83.6 V101.4" fill="none" stroke="#c2d0ec" stroke-width="1.3" />
<path d="M1200.2 88.6 L1203.2 92.6 L1206.2 88.6 Z M1207.6000000000001 102.6 L1211.2 105.6 L1207.6000000000001 108.6 Z M1218.8 92.8 L1222.4 95.8 L1218.8 98.8 Z M1212.6000000000001 100 L1215.6000000000001 103.8 L1218.6000000000001 100 Z M1215.2 115 L1218.2 111.2 L1221.2 115 Z" fill="#c2d0ec"/>
<path d="M1218.2 114 V117.4" fill="none" stroke="#c2d0ec" stroke-width="1.3" />
<path d="M1188.2 91 V104 M1205.2 113 H1213.2" fill="none" stroke="#c2d0ec" stroke-width="1.3" />
<path d="M1185.2 92.4 L1188.2 88.6 L1191.2 92.4 Z" fill="#c2d0ec"/>
<text x="1184.8" y="116" font-family="Liberation Sans,sans-serif" font-size="13.5" font-weight="700" fill="#e4b0b6" letter-spacing="-0.8">A0</text>
<rect x="1187.7" y="82.9" width="8.0" height="6.3" fill="#e2e2e2" opacity="0.7"/>
<rect x="1187.1" y="82.1" width="7.2" height="5.5" fill="#f6eecd" stroke="#e7dcb8" stroke-width="0.9"/>
<rect x="1200.3" y="94.2" width="7.8" height="6.3" fill="#e2e2e2" opacity="0.7"/>
<rect x="1199.7" y="93.4" width="7.0" height="5.5" fill="#f6eecd" stroke="#e7dcb8" stroke-width="0.9"/>
<rect x="1212.7" y="105.4" width="7.7" height="6.6" fill="#e2e2e2" opacity="0.7"/>
<rect x="1212.1" y="104.6" width="6.9" height="5.8" fill="#f6eecd" stroke="#e7dcb8" stroke-width="0.9"/>
<path d="M184 215.8 L194 215.8 L189 220.2 Z" fill="#1a1a1a"/>
<path d="M209.2 220.4 V212.6 H213.6 V220.4 M207.2 220.6 H215.8 M211.6 220.6 V224" fill="none" stroke="#1a1a1a" stroke-width="1.2"/><path d="M212.6 213 V220" stroke="#1a1a1a" stroke-width="1.6"/>
<path d="M229 214 L239 222.8 M239 214 L229 222.8" stroke="#1a1a1a" stroke-width="1.4" fill="none"/>
<path d="M233.4 247.4 L237.2 243.4 L241 247.4" stroke="#a6a6a6" stroke-width="1.6" fill="none"/>
<path d="M233.4 893 L237.2 897 L241 893" stroke="#8a8a8a" stroke-width="1.3" fill="none"/>
<path d="M18.6 911.4 L13.4 916 L18.6 920.6" stroke="#9a9a9a" stroke-width="1.3" fill="none"/>
<path d="M212.4 911.4 L217.6 916 L212.4 920.6" stroke="#8a8a8a" stroke-width="1.3" fill="none"/>
<path d="M100 376.8 L103.4 380.6 L106.8 376.8" stroke="#555555" stroke-width="1.8" fill="none"/>
<path d="M6 354 L9.5 354.2 L13.4 357 L13.6 361 L9 363 L6 362 Z" fill="#b96a34"/><path d="M9 347.8 L15.4 349.4 L16 354.6 L13.4 357.2 L9.5 354.2 L12.2 351 Z" fill="#dd9460"/><path d="M6 347.6 L9.4 347.2 L12.2 351 L9.5 354.4 L6 354.2 Z" fill="#a9cbe6"/><path d="M9.5 354.2 L13.4 357 L13.5 361" stroke="#8f4c20" stroke-width="0.7" fill="none"/>
<rect x="7" y="372.4" width="7" height="6" rx="1" fill="#4f82dc"/><rect x="8.6" y="374.59999999999997" width="4" height="1.2" fill="#e8f0ff"/><rect x="6.4" y="377.0" width="8" height="1.6" fill="#b8c8e8"/>
<rect x="7" y="382.6" width="7" height="6" rx="1" fill="#4f82dc"/><rect x="8.6" y="384.8" width="4" height="1.2" fill="#e8f0ff"/><rect x="6.4" y="387.20000000000005" width="8" height="1.6" fill="#b8c8e8"/>
<use href="#fold" x="22.4" y="398"/>
<use href="#fold" x="22.4" y="424.2"/>
<use href="#fold" x="22.4" y="450.5"/>
<path d="M23.6 466.1 L35.2 451.9 L23.6 451.9 Z" fill="#ffffff" opacity="0.92"/>
<use href="#fold" x="22.4" y="476.7"/>
<use href="#fold" x="22.4" y="503"/>
<use href="#fold" x="22.4" y="529.2"/>
<use href="#fold" x="22.4" y="555.5"/>
<use href="#fold" x="22.4" y="581.7"/>
<use href="#fold" x="22.4" y="608"/>
<use href="#fold" x="22.4" y="634.2"/>
<use href="#fold" x="22.4" y="660.5"/>
<path d="M6 402.5 L9.9 406.8 L6 411.1 Z" fill="#4a4a4a"/>
<path d="M6 455.0 L9.9 459.3 L6 463.6 Z" fill="#4a4a4a"/>
<path d="M6 481.2 L9.9 485.5 L6 489.8 Z" fill="#4a4a4a"/>
<path d="M6 507.5 L9.9 511.8 L6 516.1 Z" fill="#4a4a4a"/>
<path d="M6 560.0 L9.9 564.3 L6 568.6 Z" fill="#4a4a4a"/>
<rect x="6" y="687" width="10" height="15.6" fill="#e6ecf6" stroke="#5f6f90" stroke-width="0.9"/><rect x="6" y="687" width="10" height="3.2" fill="#4f7fe0"/><path d="M9.6 690.4 V702.4" stroke="#8a98b4" stroke-width="0.8"/><rect x="6.4" y="692.4" width="2.6" height="2.2" fill="#e07088"/><rect x="6.4" y="697.8" width="2.6" height="2.2" fill="#e8c040"/><rect x="10.6" y="692" width="4.4" height="3" fill="#ffffff"/><rect x="10.6" y="697.4" width="4.4" height="3" fill="#ffffff"/>
<path d="M6 721.7 H9.9 L6 726.2 Z" fill="#404040"/>
<rect x="23.200000000000003" y="715.4" width="15.4" height="14" rx="1" fill="#e7bb2c" stroke="#b8901c" stroke-width="0.9"/><rect x="25.200000000000003" y="717.6" width="11.4" height="9.8" fill="#eef1f6" stroke="#c9ced8" stroke-width="0.5"/><path d="M30.900000000000002 718 V727" stroke="#b9c0cc" stroke-width="0.8"/><rect x="27.8" y="713.6" width="6.2" height="3.6" rx="1" fill="#f2d878" stroke="#b8901c" stroke-width="0.7"/>
<use href="#pin" x="45" y="738.6"/>
<use href="#star" x="45" y="764"/>
<path d="M46 793 H64.2 L57.6 801 V808 H52 V801 Z" fill="url(#gFun)" stroke="#3f74de" stroke-width="0.5"/>
<path d="M24.2 826.8 H34 L29.1 832.2 Z" fill="#333333"/>
<use href="#gear" x="55.2" y="821.0"/><use href="#gear" x="50" y="827.0"/>
<path d="M50.4 835.0 L61.6 823.0 L63.8 824.8 L52.6 836.1999999999999 L50 836.8 Z" fill="#f2d64e" stroke="#8f7a3a" stroke-width="0.6"/><path d="M61.6 823.0 L63 821.6 L65 823.4 L63.8 824.8 Z" fill="#ee8a9a"/>
<rect x="69.6" y="843.4" width="15.4" height="15.6" rx="1" fill="#e2b62c" stroke="#a88a2a" stroke-width="0.9"/><rect x="74.6" y="841.2" width="6" height="3.6" rx="1" fill="#f0d470" stroke="#a88a2a" stroke-width="0.6"/><path d="M73 848 H76 M73 851 H75" stroke="#8f7a3a" stroke-width="0.8"/>
<use href="#gear" x="79.60000000000001" y="846.2"/><use href="#gear" x="74.4" y="852.2"/>
<path d="M74.80000000000001 860.2 L86.0 848.2 L88.2 850.0 L77.0 861.4 L74.4 862.0 Z" fill="#f2d64e" stroke="#8f7a3a" stroke-width="0.6"/><path d="M86.0 848.2 L87.4 846.8000000000001 L89.4 848.6 L88.2 850.0 Z" fill="#ee8a9a"/>
<rect x="21.4" y="866.4" width="17" height="15" fill="#ffffff" stroke="#4f5f80" stroke-width="1.1"/><rect x="21.4" y="866.4" width="17" height="4.4" fill="url(#gTblH)"/>
<path d="M27.1 870.8 V881.4 M32.7 870.8 V881.4 M21.4 870.8 H38.4 M21.4 874.3 H38.4 M21.4 877.9 H38.4 " stroke="#b4c0d8" stroke-width="1" fill="none"/>
<rect x="24.8" y="869.4" width="16" height="16" fill="#ffffff" stroke="#4f5f80" stroke-width="1.1"/><rect x="24.8" y="869.4" width="16" height="4.4" fill="url(#gTblH)"/>
<path d="M30.1 873.8 V885.4 M35.5 873.8 V885.4 M24.8 873.8 H40.8 M24.8 877.7 H40.8 M24.8 881.5 H40.8 " stroke="#b4c0d8" stroke-width="1" fill="none"/>
<path d="M6 894 C6 891.6 14 891.6 14 894 V904.6 H6 Z" fill="url(#gCyl)"/><ellipse cx="10" cy="893.8" rx="4" ry="1.6" fill="#fdf0b8"/>
<use href="#pin" x="288" y="338.3"/><use href="#star" x="339" y="337.1"/>
<use href="#ping" x="288" y="364.5"/><use href="#starg" x="339" y="363.3"/>
<use href="#pin" x="288" y="390.9"/><use href="#star" x="339" y="389.7"/>
<use href="#pin" x="288" y="417.1"/><use href="#star" x="339" y="415.90000000000003"/>
<path d="M1118 272.2 L1126.4 281.4 H1122.4 V292.2 H1114 V281.4 H1109.8 Z" fill="url(#gUp)" stroke="#58aa48" stroke-width="0.7"/>
<path d="M1147 292.2 L1155.6 283.4 H1151.2 V272.6 H1142.8 V283.4 H1138.6 Z" fill="url(#gDn)" stroke="#8cc87c" stroke-width="0.6"/>
<rect x="1272" y="942" width="2.6" height="2.6" fill="#bdbdbd"/><rect x="1267" y="947" width="2.6" height="2.6" fill="#bdbdbd"/><rect x="1272" y="947" width="2.6" height="2.6" fill="#bdbdbd"/><rect x="1262" y="952" width="2.6" height="2.6" fill="#bdbdbd"/><rect x="1267" y="952" width="2.6" height="2.6" fill="#bdbdbd"/><rect x="1272" y="952" width="2.6" height="2.6" fill="#bdbdbd"/>
</svg>

<!-- text -->
<span class="t" style="left:641.55px;top:9px;color:#fff;transform:scaleX(0.8713);">GENESYS</span>
<span class="t" style="left:706.55px;top:9px;color:#fff;transform:scaleX(0.9943);">2023</span>
<span class="t" style="left:742.65px;top:9px;color:#fff;transform:scaleX(1.0251);">Pro</span>
<span class="t" style="left:27.22px;top:46px;color:#fff;transform:scaleX(0.9581);font-size:14px;">File</span>
<span class="t" style="left:89.66px;top:46px;color:#fff;transform:scaleX(1.0105);font-size:14px;">Home</span>
<span class="t" style="left:152.21px;top:46px;color:#fff;transform:scaleX(0.9649);font-size:14px;">Data</span>
<span class="t" style="left:206.68px;top:46px;color:#2b579a;transform:scaleX(0.9452);font-size:14px;">Views</span>
<span class="t" style="left:266.22px;top:46px;color:#fff;transform:scaleX(0.9558);font-size:14px;">Project</span>
<span class="t" style="left:333.73px;top:46px;color:#fff;transform:scaleX(0.9163);font-size:14px;">Schema</span>
<span class="t" style="left:406.15px;top:46px;color:#fff;transform:scaleX(1.0230);font-size:14px;">Utilities</span>
<span class="t" style="left:6.72px;top:120px;color:#b9b9b9;transform:scaleX(0.9639);font-size:14px;">Properties</span>
<span class="t" style="left:78.20px;top:120px;color:#b9b9b9;transform:scaleX(0.9590);font-size:14px;">Spider</span>
<span class="t" style="left:126.72px;top:120px;color:#b9b9b9;transform:scaleX(0.9617);font-size:14px;">Hierarchy</span>
<span class="t" style="left:193.72px;top:120px;color:#b9b9b9;transform:scaleX(0.9591);font-size:14px;">Requirements</span>
<span class="t" style="left:298.04px;top:120px;color:#b9b9b9;transform:scaleX(0.8973);font-size:14px;">Use</span>
<span class="t" style="left:295.14px;top:138px;color:#b9b9b9;transform:scaleX(0.8845);font-size:14px;">Case</span>
<span class="t" style="left:341.27px;top:120px;color:#b9b9b9;transform:scaleX(0.9194);font-size:14px;">Package</span>
<span class="t" style="left:414.22px;top:120px;color:#b9b9b9;transform:scaleX(0.9206);font-size:14px;">State</span>
<span class="t" style="left:400.81px;top:138px;color:#b9b9b9;transform:scaleX(0.9498);font-size:14px;">Transition</span>
<span class="t" style="left:465.23px;top:120px;color:#b9b9b9;transform:scaleX(0.9509);font-size:14px;">Parametric</span>
<span class="t" style="left:553.27px;top:120px;color:#b9b9b9;transform:scaleX(0.9189);font-size:14px;">BDD</span>
<span class="t" style="left:595.07px;top:120px;color:#b9b9b9;transform:scaleX(0.9683);font-size:14px;">Constraint</span>
<span class="t" style="left:612.25px;top:138px;color:#b9b9b9;transform:scaleX(0.9369);font-size:14px;">BDD</span>
<span class="t" style="left:662.26px;top:120px;color:#b9b9b9;transform:scaleX(0.9277);font-size:14px;">Physical</span>
<span class="t" style="left:677.15px;top:138px;color:#b9b9b9;transform:scaleX(1.0233);font-size:14px;">N2</span>
<span class="t" style="left:717.26px;top:120px;color:#b9b9b9;transform:scaleX(0.9277);font-size:14px;">Physical</span>
<span class="t" style="left:724.97px;top:138px;color:#b9b9b9;transform:scaleX(0.9585);font-size:14px;">Block</span>
<span class="t" style="left:772.20px;top:120px;color:#b9b9b9;transform:scaleX(0.9792);font-size:14px;">Flow Internal</span>
<span class="t" style="left:794.97px;top:138px;color:#b9b9b9;transform:scaleX(0.9585);font-size:14px;">Block</span>
<span class="t" style="left:861.65px;top:120px;color:#b9b9b9;transform:scaleX(0.8667);font-size:14px;">Class</span>
<span class="t" style="left:914.05px;top:120px;color:#b9b9b9;transform:scaleX(0.8400);font-size:14px;">EFFBD</span>
<span class="t" style="left:962.18px;top:120px;color:#b9b9b9;transform:scaleX(0.9836);font-size:14px;">Activity</span>
<span class="t" style="left:1015.41px;top:120px;color:#b9b9b9;transform:scaleX(0.9374);font-size:14px;">Sequence</span>
<span class="t" style="left:1093.88px;top:120px;color:#b9b9b9;transform:scaleX(0.9984);font-size:14px;">N2</span>
<span class="t" style="left:1132.68px;top:120px;color:#b9b9b9;transform:scaleX(0.8924);font-size:14px;">IDEF0</span>
<span class="t" style="left:1183.88px;top:120px;color:#b9b9b9;transform:scaleX(0.8924);font-size:14px;">IDEF0</span>
<span class="t" style="left:1191.68px;top:138px;color:#b9b9b9;transform:scaleX(0.9704);font-size:14px;">A-0</span>
<span class="t" style="left:246.60px;top:178px;color:#1e1e1e;transform:scaleX(0.9351);font-size:14px;">General</span>
<span class="t" style="left:699.77px;top:178px;color:#1e1e1e;transform:scaleX(0.9177);font-size:14px;">Physical</span>
<span class="t" style="left:1039.59px;top:178px;color:#1e1e1e;transform:scaleX(0.9824);font-size:14px;">Functional</span>
<span class="t" style="left:9.16px;top:209px;color:#1e1e1e;transform:scaleX(1.0147);">Project Explorer</span>
<span class="t" style="left:5.58px;top:264px;color:#1e1e1e;transform:scaleX(0.9881);">el Assistant</span>
<span class="t" style="left:5.25px;top:290px;color:#1e1e1e;transform:scaleX(0.8400);">PLE:</span>
<span class="t" style="left:35.14px;top:290px;color:#1e1e1e;transform:scaleX(1.0152);">Geospatial</span>
<span class="t" style="left:109.18px;top:290px;color:#1e1e1e;transform:scaleX(0.9971);">Library</span>
<span class="t" style="left:5.58px;top:316px;color:#1e1e1e;transform:scaleX(0.9846);">atabase</span>
<span class="t" style="left:21.13px;top:342px;color:#1e1e1e;transform:scaleX(0.9500);">Packages</span>
<span class="t" style="left:24.73px;top:371px;color:#1e1e1e;transform:scaleX(0.9535);">Essentials</span>
<span class="t" style="left:42.52px;top:396px;color:#1e1e1e;transform:scaleX(1.0422);">Component</span>
<span class="t" style="left:129.39px;top:396px;color:#1e1e1e;transform:scaleX(1.0381);">(9/22)</span>
<span class="t" style="left:42.51px;top:422px;color:#1e1e1e;transform:scaleX(1.0470);">ConstraintDefinition</span>
<span class="t" style="left:183.64px;top:422px;color:#1e1e1e;transform:scaleX(1.0400);">(3/3)</span>
<span class="t" style="left:42.64px;top:449px;color:#1e1e1e;transform:scaleX(1.0289);">Document</span>
<span class="t" style="left:120.15px;top:449px;color:#1e1e1e;transform:scaleX(1.0242);">(0/13)</span>
<span class="t" style="left:42.13px;top:475px;color:#1e1e1e;transform:scaleX(1.0396);">Function</span>
<span class="t" style="left:108.14px;top:475px;color:#1e1e1e;transform:scaleX(1.0381);">(3/97)</span>
<span class="t" style="left:41.80px;top:501px;color:#1e1e1e;transform:scaleX(1.0918);">Item</span>
<span class="t" style="left:80.65px;top:501px;color:#1e1e1e;transform:scaleX(1.0339);">(29/51)</span>
<span class="t" style="left:42.19px;top:527px;color:#1e1e1e;transform:scaleX(0.9902);">Link</span>
<span class="t" style="left:77.60px;top:527px;color:#1e1e1e;transform:scaleX(1.0833);">(11/11)</span>
<span class="t" style="left:42.15px;top:554px;color:#1e1e1e;transform:scaleX(1.0214);">Requirement</span>
<span class="t" style="left:135.65px;top:554px;color:#1e1e1e;transform:scaleX(1.0339);">(29/35)</span>
<span class="t" style="left:42.28px;top:580px;color:#1e1e1e;transform:scaleX(0.9074);">Risk</span>
<span class="t" style="left:77.39px;top:580px;color:#1e1e1e;transform:scaleX(1.0400);">(1/1)</span>
<span class="t" style="left:42.71px;top:606px;color:#1e1e1e;transform:scaleX(0.9502);">State</span>
<span class="t" style="left:84.41px;top:606px;color:#1e1e1e;transform:scaleX(1.0169);">(12/12)</span>
<span class="t" style="left:42.25px;top:632px;color:#1e1e1e;transform:scaleX(0.9330);">UseCase</span>
<span class="t" style="left:106.38px;top:632px;color:#1e1e1e;transform:scaleX(1.0489);">(7/7)</span>
<span class="t" style="left:43.17px;top:659px;color:#1e1e1e;transform:scaleX(1.0228);">VerificationRequirement</span>
<span class="t" style="left:20.78px;top:685px;color:#1e1e1e;transform:scaleX(1.0318);">Independent Views</span>
<span class="t" style="left:45.48px;top:711px;color:#1e1e1e;transform:scaleX(0.9786);">View Lists</span>
<span class="t" style="left:68.86px;top:737px;color:#1e1e1e;transform:scaleX(1.0103);">Project Pinned</span>
<span class="t" style="left:68.90px;top:764px;color:#1e1e1e;transform:scaleX(0.9760);">User Favorites</span>
<span class="t" style="left:68.85px;top:790px;color:#1e1e1e;transform:scaleX(1.0184);">Filtered</span>
<span class="t" style="left:68.74px;top:816px;color:#1e1e1e;transform:scaleX(1.0197);">Custom</span>
<span class="t" style="left:90.36px;top:842px;color:#1e1e1e;transform:scaleX(0.9836);">CustomViewList_001</span>
<span class="t" style="left:45.43px;top:865px;color:#1e1e1e;transform:scaleX(0.9810);">Table Views</span>
<div class="a" style="left:210px;top:659px;width:16px;height:20px;overflow:hidden"><span class="t" style="left:0.20px;top:0;color:#1e1e1e;transform:scaleX(0.9700)">(12/12)</span></div>
<div class="a" style="left:19px;top:890px;width:207px;height:15px;overflow:hidden"><span class="t" style="left:-0.52px;top:0;color:#1e1e1e;transform:scaleX(1.0000)">Related Projects</span></div>
<span class="t" style="left:261.17px;top:206px;color:#fff;transform:scaleX(1.0048);font-weight:700;">Custom</span>
<span class="t" style="left:319.18px;top:206px;color:#fff;transform:scaleX(0.9502);font-weight:700;">View</span>
<span class="t" style="left:354.74px;top:206px;color:#fff;transform:scaleX(1.0619);font-weight:700;">List:</span>
<span class="t" style="left:390.68px;top:206px;color:#fff;transform:scaleX(0.9913);font-weight:700;">CustomViewList_001</span>
<span class="t" style="left:269.63px;top:244px;color:#1e1e1e;transform:scaleX(1.0385);">Name:</span>
<span class="t" style="left:322.56px;top:244px;color:#1e1e1e;transform:scaleX(0.9926);">CustomViewList_001</span>
<span class="t" style="left:1188.19px;top:244px;color:#1e1e1e;transform:scaleX(0.9740);">Save As</span>
<span class="t" style="left:1180.17px;top:274px;color:#1e1e1e;transform:scaleX(1.0277);">Add Views</span>
<span class="t" style="left:281.07px;top:313px;color:#1e1e1e;transform:scaleX(1.0013);">Pin</span>
<span class="t" style="left:331.48px;top:313px;color:#1e1e1e;transform:scaleX(0.9043);">Fav</span>
<span class="t" style="left:383.43px;top:313px;color:#1e1e1e;transform:scaleX(0.9943);">Owning Class</span>
<span class="t" style="left:507.65px;top:313px;color:#1e1e1e;transform:scaleX(1.0355);">Owning Entity</span>
<span class="t" style="left:653.42px;top:313px;color:#1e1e1e;transform:scaleX(1.0085);">View Name</span>
<span class="t" style="left:792.68px;top:313px;color:#1e1e1e;transform:scaleX(0.9905);">View Type</span>
<span class="t" style="left:905.38px;top:313px;color:#1e1e1e;transform:scaleX(1.0443);">Last Modified by</span>
<span class="t" style="left:382.32px;top:339px;color:#1c2c74;transform:scaleX(1.0374);">Component</span>
<span class="t" style="left:501.30px;top:339px;color:#1c2c74;transform:scaleX(1.0032);">Geospatial Library</span>
<span class="t" style="left:634.77px;top:339px;color:#1c2c74;transform:scaleX(1.0000);">Light Blue FlowIBD</span>
<span class="t" style="left:773.16px;top:339px;color:#1c2c74;transform:scaleX(1.0155);">FlowInternalBlock</span>
<span class="t" style="left:905.17px;top:339px;color:#1c2c74;transform:scaleX(1.0455);">Administrator</span>
<span class="t" style="left:382.32px;top:365px;color:#1c2c74;transform:scaleX(1.0374);">Component</span>
<span class="t" style="left:501.30px;top:365px;color:#1c2c74;transform:scaleX(1.0032);">Geospatial Library</span>
<span class="t" style="left:634.80px;top:365px;color:#1c2c74;transform:scaleX(0.9769);">Red Flow IBD</span>
<span class="t" style="left:773.16px;top:365px;color:#1c2c74;transform:scaleX(1.0155);">FlowInternalBlock</span>
<span class="t" style="left:905.17px;top:365px;color:#1c2c74;transform:scaleX(1.0455);">Administrator</span>
<span class="t" style="left:382.32px;top:391px;color:#1c2c74;transform:scaleX(1.0374);">Component</span>
<span class="t" style="left:501.30px;top:391px;color:#1c2c74;transform:scaleX(1.0032);">Geospatial Library</span>
<span class="t" style="left:634.81px;top:391px;color:#1c2c74;transform:scaleX(0.9674);">Fuchsia BDD</span>
<span class="t" style="left:773.22px;top:391px;color:#1c2c74;transform:scaleX(0.9628);">BDD</span>
<span class="t" style="left:905.17px;top:391px;color:#1c2c74;transform:scaleX(1.0455);">Administrator</span>
<span class="t" style="left:382.32px;top:417px;color:#1c2c74;transform:scaleX(1.0374);">Component</span>
<span class="t" style="left:501.30px;top:417px;color:#1c2c74;transform:scaleX(1.0032);">Geospatial Library</span>
<span class="t" style="left:634.77px;top:417px;color:#1c2c74;transform:scaleX(0.9782);">Green BDD</span>
<span class="t" style="left:773.22px;top:417px;color:#1c2c74;transform:scaleX(0.9628);">BDD</span>
<span class="t" style="left:905.17px;top:417px;color:#1c2c74;transform:scaleX(1.0455);">Administrator</span>
<span class="t" style="left:4.76px;top:936px;color:#1e1e1e;transform:scaleX(1.0159);">Repository:</span>
<span class="t" style="left:82.95px;top:936px;color:#1e1e1e;transform:scaleX(0.9808);">Local</span>
<span class="t" style="left:129.75px;top:936px;color:#1e1e1e;transform:scaleX(1.0246);">Project:</span>
<span class="t" style="left:184.13px;top:936px;color:#1e1e1e;transform:scaleX(0.9150);">SAMPLE:</span>
<span class="t" style="left:245.54px;top:936px;color:#1e1e1e;transform:scaleX(1.0085);">Geospatial</span>
<span class="t" style="left:319.49px;top:936px;color:#1e1e1e;transform:scaleX(0.9878);">Library</span>
<span class="t" style="left:377.56px;top:936px;color:#1e1e1e;transform:scaleX(1.0102);">Username:</span>
<span class="t" style="left:452.97px;top:936px;color:#1e1e1e;transform:scaleX(1.0408);">Administrator</span>
<span class="t" style="left:556.77px;top:936px;color:#1e1e1e;transform:scaleX(1.0635);">Authentication</span>
<span class="t" style="left:658.13px;top:936px;color:#1e1e1e;transform:scaleX(1.0429);">Mode:</span>
<span class="t" style="left:704.06px;top:936px;color:#1e1e1e;transform:scaleX(0.8560);">GENESYS</span>
</body>
</html>
